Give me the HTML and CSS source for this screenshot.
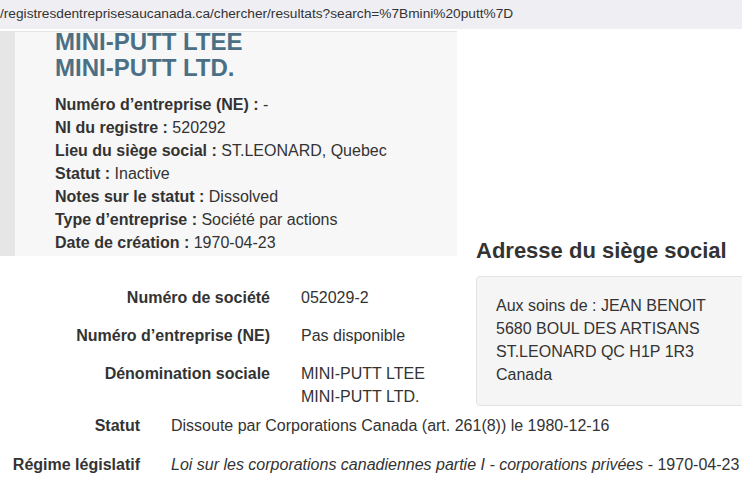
FILE: index.html
```html
<!DOCTYPE html>
<html lang="fr">
<head>
<meta charset="utf-8">
<link rel="stylesheet" href="styles.css">
</head>
<body>
<div class="urlbar"><span class="url">/registresdentreprisesaucanada.ca/chercher/resultats?search=%7Bmini%20putt%7D</span></div>
<div class="main">
  <div class="left">
    <div class="top">
      <div class="strip"></div>
      <div class="card">
        <h2 class="title">MINI-PUTT LTEE<br>MINI-PUTT LTD.</h2>
        <ul class="facts">
          <li><b>Numéro d’entreprise (NE) :</b> -</li>
          <li><b>NI du registre :</b> 520292</li>
          <li><b>Lieu du siège social :</b> ST.LEONARD, Quebec</li>
          <li><b>Statut :</b> Inactive</li>
          <li><b>Notes sur le statut :</b> Dissolved</li>
          <li><b>Type d’entreprise :</b> Société par actions</li>
          <li><b>Date de création :</b> 1970-04-23</li>
        </ul>
      </div>
    </div>
    <dl class="details">
      <dt>Numéro de société</dt><dd>052029-2</dd>
      <dt>Numéro d’entreprise (NE)</dt><dd>Pas disponible</dd>
      <dt>Dénomination sociale</dt><dd>MINI-PUTT LTEE<br>MINI-PUTT LTD.</dd>
    </dl>
  </div>
  <div class="right">
    <h3 class="addr-title">Adresse du siège social</h3>
    <div class="addr-box">Aux soins de : JEAN BENOIT<br>5680 BOUL DES ARTISANS<br>ST.LEONARD QC H1P 1R3<br>Canada</div>
  </div>
</div>
<dl class="details2">
  <dt>Statut</dt><dd>Dissoute par Corporations Canada (art. 261(8)) le 1980-12-16</dd>
  <dt>Régime législatif</dt><dd><i>Loi sur les corporations canadiennes partie I - corporations privées</i> - 1970-04-23</dd>
</dl>
</body>
</html>
```
FILE: styles.css
```css
* { box-sizing: border-box; }
html, body { margin: 0; padding: 0; background: #fff; overflow: hidden; }
body { font-family: "Liberation Sans", Arial, sans-serif; color: #333; width: 742px; height: 485px; }

.urlbar { height: 31px; background: #efeff3; display: flex; align-items: center; border-bottom: 2px solid #fff; overflow: hidden; white-space: nowrap; padding-bottom: 2px; }
.url { font-family: "Liberation Sans", sans-serif; font-size: 13.7px; color: #333; margin-left: 0; }

.main { display: flex; }
.left { width: 457px; flex: none; }
.top { display: flex; height: 225px; border-top: 1px solid #e4e4e4; }
.strip { width: 15px; background: #e6e6e6; }
.card { flex: 1; background: #f7f7f7; padding: 0 0 0 40px; }
.title { margin: 0; font-size: 24px; line-height: 26px; font-weight: bold; color: #4b6f85; margin-top: -3px; }
.facts { list-style: none; margin: 12px 0 0; padding: 0; font-size: 16px; line-height: 23px; }
.facts b { font-weight: bold; }

.details { display: grid; grid-template-columns: 270px 1fr; column-gap: 31px; row-gap: 15px; margin: 30px 0 0; font-size: 16px; line-height: 23px; }
.details dt { font-weight: bold; text-align: right; }
.details dd { margin: 0; }

.right { flex: 1; padding: 0 0 0 19px; min-width: 0; }
.addr-title { margin: 203px 0 0; font-size: 22px; line-height: 34px; font-weight: bold; color: #333; white-space: nowrap; }
.addr-box { margin-top: 8px; margin-right: -10px; background: #f5f5f5; border: 1px solid #e3e3e3; border-radius: 4px; padding: 17px 19px; font-size: 16px; line-height: 23px; height: 130px; }

.details2 { display: grid; grid-template-columns: 140px 1fr; column-gap: 31px; row-gap: 16px; margin: 6px 0 0; font-size: 16px; line-height: 23px; }
.details2 dt { font-weight: bold; text-align: right; }
.details2 dd { margin: 0; white-space: nowrap; }
```
